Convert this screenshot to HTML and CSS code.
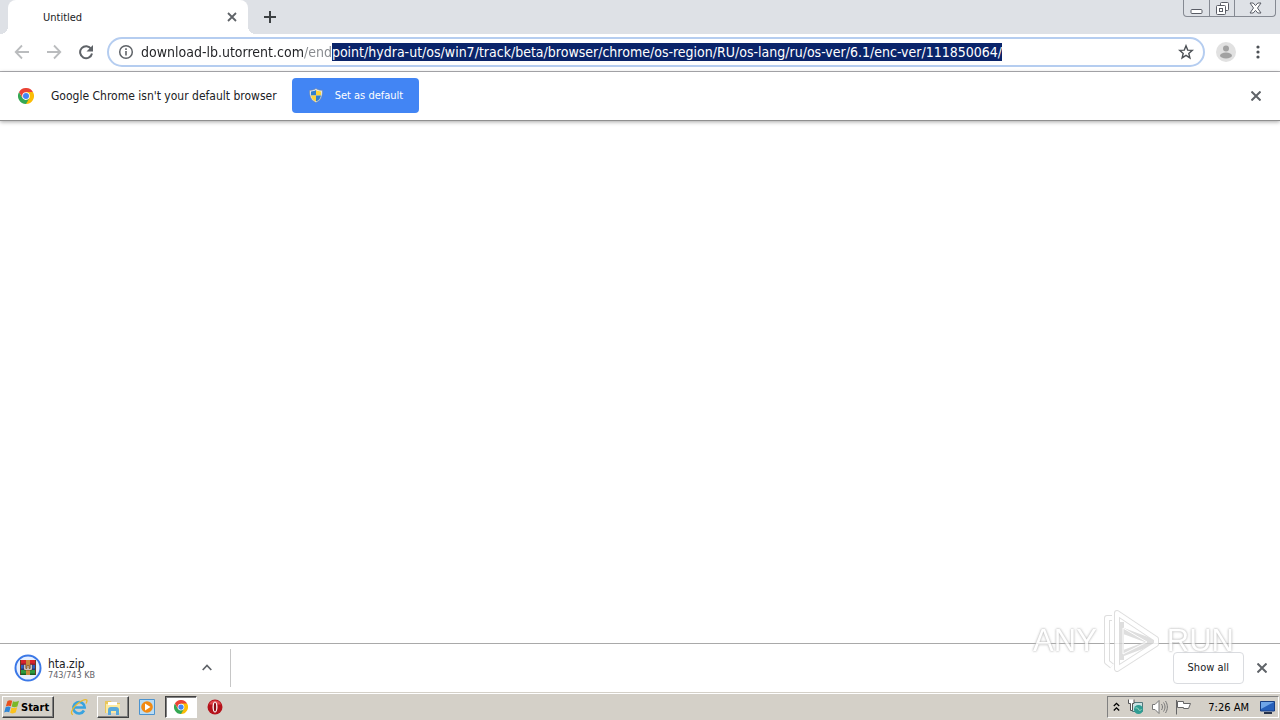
FILE: index.html
```html
<!DOCTYPE html>
<html lang="en">
<head>
    <meta charset="UTF-8">
    <meta name="viewport" content="width=device-width, initial-scale=1.0">
    <title>Untitled</title>
    <link rel="stylesheet" href="styles.css">
</head>
<body>
    <!-- Shared Chrome logo -->
    <svg class="defs" width="0" height="0" aria-hidden="true">
        <symbol id="chrome" viewBox="0 0 48 48">
            <path fill="#ea4335" d="M24 24 3.2 12a24 24 0 0 1 41.6 0z"/>
            <path fill="#fbbc05" d="M24 24V12h20.8A24 24 0 0 1 24 48z"/>
            <path fill="#34a853" d="M24 48A24 24 0 0 1 3.2 12L13.6 30 24 36l10.4-6z"/>
            <path fill="#ea4335" d="M3.2 12 13.6 30 24 12z"/>
            <circle cx="24" cy="24" r="11.5" fill="#fff"/>
            <circle cx="24" cy="24" r="9" fill="#4285f4"/>
        </symbol>
    </svg>

    <header class="tabstrip">
        <div class="tab">
            <span class="tab-title">Untitled</span>
            <button class="icon-btn" aria-label="Close tab">
                <svg width="10" height="10" viewBox="0 0 10 10"><path d="M1 1l8 8M9 1l-8 8" stroke="#5f6368" stroke-width="1.8"/></svg>
            </button>
        </div>
        <button class="icon-btn new-tab" aria-label="New tab">
            <svg width="12" height="12" viewBox="0 0 12 12"><path d="M6 0v12M0 6h12" stroke="#3c4043" stroke-width="2"/></svg>
        </button>
        <div class="window-buttons">
            <button aria-label="Minimize">
                <svg width="13" height="14" viewBox="0 0 13 14"><rect x="1" y="8.5" width="11" height="4" rx="1" fill="#fff" stroke="#5a5d66"/></svg>
            </button>
            <button aria-label="Restore">
                <svg width="13" height="14" viewBox="0 0 13 14" fill="#fff" stroke="#5a5d66"><rect x="4.5" y="1.5" width="8" height="8" rx="1"/><rect x=".5" y="4.5" width="9" height="9" rx="1"/><rect x="3.5" y="7.5" width="3" height="3"/></svg>
            </button>
            <button class="wide" aria-label="Close">
                <svg width="13" height="12" viewBox="0 0 13 12"><path d="M1 1h3.2l2.3 2.6L8.800 1H12L8.500 6l3.5 5H8.800L6.500 8.400 4.200 11H1l3.5-5z" fill="#fff" stroke="#5a5d66"/></svg>
            </button>
        </div>
    </header>

    <nav class="toolbar">
        <button class="icon-btn" aria-label="Back">
            <svg width="16" height="16" viewBox="0 0 16 16" fill="none" stroke="#babcbe" stroke-width="1.8"><path d="M15 8H2M8 1.500 1.700 8 8 14.500"/></svg>
        </button>
        <button class="icon-btn" aria-label="Forward">
            <svg width="16" height="16" viewBox="0 0 16 16" fill="none" stroke="#babcbe" stroke-width="1.8"><path d="M1 8h13M8 1.500 14.300 8 8 14.500"/></svg>
        </button>
        <button class="icon-btn" aria-label="Reload">
            <svg width="16" height="16" viewBox="0 0 16 16"><path d="M13.2 5A6 6 0 1 0 14 9.500" fill="none" stroke="#5f6368" stroke-width="2"/><path d="M15 1v6.500H8.500z" fill="#5f6368"/></svg>
        </button>
        <div class="omnibox">
            <svg width="16" height="16" viewBox="0 0 16 16"><circle cx="8" cy="8" r="6.3" fill="none" stroke="#5f6368" stroke-width="1.5"/><path d="M8 7v4.500M8 4.300V6" stroke="#5f6368" stroke-width="1.6"/></svg>
            <input type="text" id="url" class="url" aria-label="Address" spellcheck="false" value="download-lb.utorrent.com/endpoint/hydra-ut/os/win7/track/beta/browser/chrome/os-region/RU/os-lang/ru/os-ver/6.1/enc-ver/111850064/">
            <button class="icon-btn" aria-label="Bookmark this page">
                <svg width="16" height="16" viewBox="0 0 16 16"><path d="M8 1.800l1.700 4.300 4.600.3-3.500 3 1.100 4.500L8 11.400l-3.900 2.500 1.100-4.500-3.500-3 4.600-.3z" fill="none" stroke="#4d5156" stroke-width="1.4"/></svg>
            </button>
        </div>
        <button class="icon-btn" aria-label="Profile">
            <svg width="20" height="20" viewBox="0 0 20 20"><circle cx="10" cy="10" r="10" fill="#e1e1e1"/><circle cx="10" cy="6.5" r="3" fill="#a2a2a2"/><ellipse cx="10" cy="13.5" rx="6" ry="3" fill="#a2a2a2"/></svg>
        </button>
        <button class="icon-btn" aria-label="Menu">
            <svg width="4" height="14" viewBox="0 0 4 14" fill="#4d5156"><circle cx="2" cy="2" r="1.6"/><circle cx="2" cy="7" r="1.6"/><circle cx="2" cy="12" r="1.6"/></svg>
        </button>
    </nav>

    <section class="infobar">
        <svg width="16" height="16"><use href="#chrome"/></svg>
        <span class="infobar-text">Google Chrome isn't your default browser</span>
        <button class="default-btn">
            <svg width="14" height="15" viewBox="0 0 14 15">
                <path d="M7 .5C5 2 3 2.300.700 2.300.300 8 2 12.500 7 14.500c5-2 6.700-6.500 6.300-12.200C11 2.300 9 2 7 .5z" fill="#e9edf2" stroke="#7c8794" stroke-width=".6"/>
                <path d="M7 2C5.300 3 4 3.400 2 3.500V7.500h5z" fill="#2f7fd0"/><path d="M7 2c1.700 1 3 1.400 5 1.500v4H7z" fill="#fbd43c"/>
                <path d="M2 7.500c.5 3 2 4.700 5 6v-6z" fill="#fbd43c"/><path d="M12 7.500c-.5 3-2 4.700-5 6v-6z" fill="#2f7fd0"/>
            </svg>
            Set as default
        </button>
        <button class="icon-btn push" aria-label="Dismiss">
            <svg width="10" height="10" viewBox="0 0 10 10"><path d="M.5.5l9 9M9.500.5l-9 9" stroke="#5f6368" stroke-width="2"/></svg>
        </button>
    </section>

    <main class="page"></main>

    <footer class="shelf">
        <div class="download">
            <svg width="28" height="28" viewBox="0 0 28 28">
                <circle cx="14" cy="14" r="12.5" fill="#e8f0fe" stroke="#3b78e7" stroke-width="2"/>
                <path fill="#d8232a" d="M6 6h16v5H6z"/><path fill="#2b5fc4" d="M6 11h16v5H6z"/><path fill="#2c9a3c" d="M6 16h16v5H6z"/>
                <path fill="#8c1c3c" d="M6 9.500h16V11H6z"/><path fill="#1c3a80" d="M6 14.500h16V16H6z"/><path fill="#176026" d="M6 19.500h16V21H6z"/>
                <path fill="#c98a3c" d="M12 6h4v15h-4z"/><path fill="#6d3b20" d="M6 6h1v15H6zM21 6h1v15h-1z"/>
                <path fill="#fff" stroke="#5a3418" stroke-width=".6" d="M10 10.500h1.700v4h1.500v-3h1.600v3h1.500v-4H18V16h-8z"/>
            </svg>
            <div class="file">
                <span class="file-name">hta.zip</span>
                <span class="file-size">743/743 KB</span>
            </div>
            <button class="icon-btn push" aria-label="Download options">
                <svg width="10" height="7" viewBox="0 0 10 7"><path d="M.7 6 5 1.500 9.300 6" fill="none" stroke="#5f6368" stroke-width="1.7"/></svg>
            </button>
        </div>
        <button class="show-all push">Show all</button>
        <button class="icon-btn" aria-label="Close downloads bar">
            <svg width="10" height="10" viewBox="0 0 10 10"><path d="M.5.5l9 9M9.500.5l-9 9" stroke="#5f6368" stroke-width="2"/></svg>
        </button>
    </footer>

    <div class="taskbar">
        <button class="start">
            <svg width="16" height="16" viewBox="0 0 16 16">
                <path fill="#e8501c" d="M3.500 2C5 1 6.500 1 8.200 1.800L6.900 7.200C5.200 6.400 3.700 6.500 1.800 7.400z"/>
                <path fill="#7bb829" d="M9 2.200c1.800.9 3.700.8 6-.4l-1.600 5.600c-1.900 1-3.900 1-5.700.2z"/>
                <path fill="#2f86d6" d="M1.600 8.200c1.800-1 3.400-1 5-.2l-1.400 5.300c-1.600-.8-3.300-.8-5 .3z"/>
                <path fill="#fbc21d" d="M7.500 8.400c1.800.9 3.800.8 5.700-.2l-1.500 5.400c-1.900 1-3.900 1-5.600.2z"/>
            </svg>
            Start
        </button>
        <button class="task" aria-label="Internet Explorer">
            <svg width="18" height="18" viewBox="0 0 18 18" fill="none"><path d="M14 12.500A5.700 5.700 0 1 1 14.700 9.500H4" stroke="#38a3e0" stroke-width="2.6"/><path d="M3 16.500C.5 16.500 1 12 5.500 7.500S15.500.5 16.700 2c.6.800.2 2-.7 3.500" stroke="#e9b92c" stroke-width="1.3"/></svg>
        </button>
        <button class="task raised" aria-label="Windows Explorer">
            <svg width="18" height="18" viewBox="0 0 18 18"><path fill="#e8c65c" d="M1 3h6l1 2h8v10H1z"/><path fill="#fbe9a0" d="M2 6h14v9H2z"/><path fill="#fff" d="M4 4h9v3H4z"/><path fill="#58a9dc" d="M4 17v-5c0-2 1-3 3-3h5c2 0 3 1 3 3v5h-3v-4H7v4z"/></svg>
        </button>
        <button class="task" aria-label="Media Player">
            <svg width="16" height="16" viewBox="0 0 16 16"><path fill="#b9dcf4" stroke="#4b93cf" d="M.5.5h15v15H.5z"/><circle cx="8" cy="8" r="5.8" fill="#f28a12"/><path fill="#fff" d="M6 4.500 11.500 8 6 11.500z"/></svg>
        </button>
        <button class="task pressed" aria-label="Google Chrome">
            <svg width="14" height="14"><use href="#chrome"/></svg>
        </button>
        <button class="task" aria-label="Opera">
            <svg width="16" height="16" viewBox="0 0 16 16"><circle cx="8" cy="8" r="7.5" fill="#b5121b"/><path fill="#e0474c" d="M2 5.500a6.500 6.500 0 0 1 12 0z"/><ellipse cx="8" cy="8" rx="2.5" ry="5.5" fill="#fff"/><ellipse cx="8" cy="8" rx="1.2" ry="4.6" fill="#8a0d14"/></svg>
        </button>
        <div class="tray">
            <svg width="7" height="10" viewBox="0 0 7 10" fill="none" stroke="#000" stroke-width="1.3"><path d="M.8 4 3.500 1.300 6.200 4M.8 8.500l2.700-2.700 2.700 2.700"/></svg>
            <svg width="17" height="16" viewBox="0 0 17 16"><path fill="#c8e3e4" stroke="#53787c" d="M5.500 3.500h10v9h-10z"/><circle cx="11.5" cy="10.5" r="4.5" fill="#2f9d93"/><path d="M8.500 9c2-.5 3 .5 3 1.500s2 1 3 0" stroke="#a9e0c8" fill="none"/><path fill="#fff" stroke="#555" d="M1.500.5v4h2v7h2v-7h1.500v-4"/></svg>
            <svg width="17" height="16" viewBox="0 0 17 16" fill="none" stroke="#777"><path fill="#fff" d="M1.500 5.500h2.500l4-4v13l-4-4H1.500z"/><path d="M10.500 5c1.300 2 1.300 4 0 6M12.500 3.500c2 3 2 6 0 9M14.500 2c2.500 4 2.500 8 0 12"/></svg>
            <svg width="17" height="16" viewBox="0 0 17 16" stroke="#666"><path fill="#fff" d="M2.500 2.500h6v2h7l-2 5h-5v-1h-6z"/><path d="M1.500 1v14.500"/></svg>
            <time class="clock">7:26 AM</time>
            <svg width="15" height="13" viewBox="0 0 15 13"><path fill="#2660bb" stroke="#183e83" d="M.5.5h14v9.500H.5z"/><path fill="#6fa5e8" d="M1 1h13L1 8z"/><path fill="#26324a" d="M4 11h8v2H4z"/></svg>
        </div>
    </div>

    <div class="watermark">
        <span>ANY</span>
        <svg width="58" height="66" viewBox="0 0 58 66" fill="none" stroke-linejoin="round">
            <g stroke="#d6d6d6" stroke-width="6">
                <path d="M14 5 53 31v5L14 61z"/>
                <path d="M18 14v38M18 22l32 12M18 46l32-12"/>
                <path d="M9 10H4v44l5 4"/>
            </g>
            <g stroke="#fff" stroke-width="4">
                <path d="M14 5 53 31v5L14 61z"/>
                <path d="M9 10H4v44l5 4"/>
            </g>
            <path d="M20 20v26l24-12z" stroke="#fff" stroke-width="1"/>
        </svg>
        <span>RUN</span>
    </div>

    <script>
        const url = document.getElementById("url");
        url.focus();
        url.setSelectionRange(url.value.indexOf("point"), url.value.length);
    </script>
</body>
</html>
```
FILE: styles.css
```css
* {
    box-sizing: border-box;
}
body {
    margin: 0;
    min-height: 100vh;
    display: flex;
    flex-direction: column;
    background: #fff;
    color: #202124;
    font-family: "DejaVu Sans Condensed", "DejaVu Sans", sans-serif;
    font-size: 11px;
    overflow: hidden;
}
button {
    font: inherit;
    color: inherit;
    margin: 0;
    padding: 0;
    border: 0;
    background: none;
    cursor: pointer;
}
svg {
    display: block;
    flex: none;
}
.defs {
    position: absolute;
}
.icon-btn {
    display: flex;
    flex: none;
    align-items: center;
    justify-content: center;
    width: 16px;
    height: 16px;
}
.push {
    margin-left: auto;
}

/* Tab strip */
.tabstrip {
    display: flex;
    align-items: flex-start;
    height: 34px;
    padding: 0 4px 0 8px;
    background: #dee1e6;
}
.tab {
    position: relative;
    display: flex;
    align-items: center;
    justify-content: space-between;
    width: 240px;
    height: 34px;
    padding: 0 8px 0 35px;
    background: #fff;
    border-radius: 8px 8px 0 0;
}
.tab::before,
.tab::after {
    content: "";
    position: absolute;
    bottom: 0;
    width: 8px;
    height: 8px;
}
.tab::before {
    right: 100%;
    background: radial-gradient(circle at 0 0, #dee1e6 8px, #fff 8px);
}
.tab::after {
    left: 100%;
    background: radial-gradient(circle at 100% 0, #dee1e6 8px, #fff 8px);
}
.new-tab {
    margin: 9px 0 0 14px;
}
.window-buttons {
    display: flex;
    margin-left: auto;
    height: 17px;
    border: 1px solid #858992;
    border-top: 0;
    border-radius: 0 0 4px 4px;
}
.window-buttons button {
    display: flex;
    align-items: center;
    justify-content: center;
    width: 25px;
}
.window-buttons button + button {
    border-left: 1px solid #858992;
}
.window-buttons .wide {
    width: 41px;
}

/* Toolbar */
.toolbar {
    display: flex;
    align-items: center;
    gap: 16px;
    height: 38px;
    padding: 0 14px 2px;
    border-bottom: 1px solid #b0b0b4;
}
.omnibox {
    display: flex;
    flex: 1;
    align-items: center;
    gap: 7px;
    height: 30px;
    margin: 0 -3px;
    padding: 0 9px;
    border: 2px solid #b5cdf0;
    border-radius: 15px;
}
.url {
    flex: 1;
    min-width: 0;
    height: 18px;
    margin: 0;
    padding: 0;
    border: 0;
    outline: 0;
    font: 14px/18px "DejaVu Sans Condensed", "DejaVu Sans", sans-serif;
    color: transparent;
    /* host is dark, path is grey */
    background: linear-gradient(90deg, #202124 163px, #85888c 163px);
    -webkit-background-clip: text;
    background-clip: text;
}
.url::selection {
    background: #0a246a;
    color: #fff;
}

/* Default browser prompt */
.infobar {
    z-index: 1;
    display: flex;
    align-items: center;
    height: 49px;
    padding: 0 16px 0 18px;
    background: #fff;
    border-bottom: 1px solid #8f8f8f;
    box-shadow: 0 1px 4px rgba(0, 0, 0, 0.35);
}
.infobar-text {
    margin: 0 15px 0 17px;
    font-size: 12px;
}
.default-btn {
    display: flex;
    align-items: center;
    gap: 12px;
    height: 35px;
    margin-bottom: 1px;
    padding: 0 16px 0 17px;
    background: #4285f4;
    color: #fff;
    border-radius: 4px;
}
.page {
    flex: 1;
}

/* Downloads */
.shelf {
    display: flex;
    align-items: center;
    gap: 10px;
    height: 49px;
    padding: 0 10px 1px 0;
    border-top: 1px solid #a9a9a9;
}
.download {
    display: flex;
    align-items: center;
    gap: 6px;
    width: 231px;
    height: 38px;
    padding: 0 15px 0 14px;
    border-right: 1px solid #c6c6c6;
}
.file {
    display: flex;
    flex-direction: column;
    padding-top: 2px;
}
.file-name {
    font-size: 12px;
    line-height: 12px;
}
.file-size {
    font-size: 9px;
    line-height: 10px;
    color: #5f6368;
}
.show-all {
    height: 32px;
    padding: 0 14px;
    border: 1px solid #dadce0;
    border-radius: 4px;
}

/* Taskbar */
.taskbar {
    display: flex;
    align-items: center;
    gap: 2px;
    height: 28px;
    padding: 3px 1px 2px 2px;
    background: #d4d0c8;
    border-top: 1px solid #d4d0c8;
    box-shadow: inset 0 1px #fff;
    color: #000;
}
.start {
    display: flex;
    align-items: center;
    gap: 1px;
    height: 22px;
    padding: 0 4px 0 1px;
    margin-right: 7px;
    border: 1px solid;
    border-color: #fff #404040 #404040 #fff;
    box-shadow: inset -1px -1px #808080;
    font-weight: bold;
}
.task {
    display: flex;
    align-items: center;
    justify-content: center;
    width: 32px;
    height: 22px;
    border: 1px solid transparent;
}
.raised {
    border-color: #fff #404040 #404040 #fff;
    box-shadow: inset -1px -1px #808080;
}
.pressed {
    background: #fff;
    border-color: #404040 #fff #fff #404040;
    box-shadow: inset 1px 1px #808080;
}
.tray {
    display: flex;
    align-items: center;
    gap: 7px;
    height: 22px;
    margin-left: auto;
    padding: 0 3px 0 5px;
    border: 1px solid;
    border-color: #808080 #fff #fff #808080;
}
.clock {
    margin: 0 4px 0 9px;
}

/* Watermark over the page corner */
.watermark {
    position: absolute;
    right: 46px;
    bottom: 46px;
    display: flex;
    align-items: center;
    gap: 6px;
    opacity: 0.8;
    pointer-events: none;
}
.watermark span {
    font: 31px/40px "Liberation Sans Narrow", "Liberation Sans", sans-serif;
    color: #fff;
    text-shadow: 0 0 2px #aaa, 0 0 3px #bbb;
}
```
